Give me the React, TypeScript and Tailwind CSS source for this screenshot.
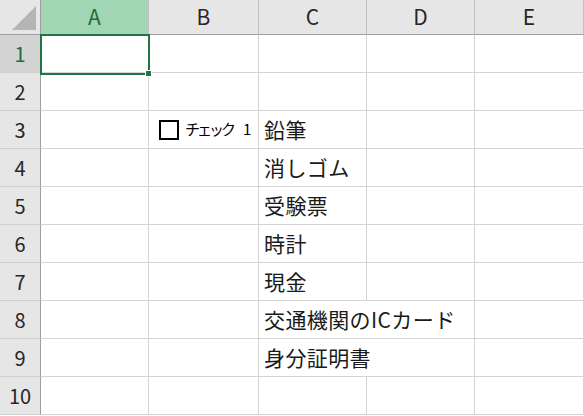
import { Fragment } from "react"

const COLUMNS = ["A", "B", "C", "D", "E"] as const
const ROWS = [1, 2, 3, 4, 5, 6, 7, 8, 9, 10] as const

// column C contents, keyed by row number
const ITEMS: Record<number, string> = {
  3: "鉛筆",
  4: "消しゴム",
  5: "受験票",
  6: "時計",
  7: "現金",
  8: "交通機関のICカード",
  9: "身分証明書",
}

const FONT = "font-['Noto_Sans_CJK_JP','Noto_Sans',sans-serif]"

function CornerCell() {
  return (
    <div className="flex items-end justify-end border-r border-b border-[#9e9e9e] bg-[#e6e6e6] pr-[4px] pb-[4px]">
      <svg width="24" height="24" viewBox="0 0 24 24">
        <polygon points="24,0 24,24 0,24" fill="#b5b5b5" />
      </svg>
    </div>
  )
}

function ColumnHeader({ label, active }: { label: string; active: boolean }) {
  return (
    <div
      className={`flex items-center justify-center border-r border-b border-r-[#c0c0c0] border-b-[#9e9e9e] text-[21px] ${
        active ? "bg-[#a0d6b4] text-[#1e6b3e]" : "bg-[#e6e6e6] text-[#262626]"
      }`}
    >
      {label}
    </div>
  )
}

function RowHeader({ n, active }: { n: number; active: boolean }) {
  return (
    <div
      className={`flex items-center justify-center border-r border-b border-r-[#9e9e9e] border-b-[#d0d0d0] text-[20px] ${
        active ? "bg-[#d3d3d3] text-[#1e6b3e]" : "bg-[#e6e6e6] text-[#262626]"
      }`}
    >
      {n}
    </div>
  )
}

function CheckBox() {
  return (
    <div className="flex h-full items-center pl-[10px]">
      <span className="block h-[20px] w-[20px] border-2 border-black bg-white" />
      <span className="ml-[6px] text-[15px] tracking-[-3px] text-black">チェック</span>
      <span className="ml-[10px] text-[15px] text-black">1</span>
    </div>
  )
}

function Cell({ row, col }: { row: number; col: string }) {
  const selected = row === 1 && col === "A"
  return (
    <div className="relative border-r border-b border-[#d4d4d4] bg-white">
      {col === "B" && row === 3 && <CheckBox />}
      {col === "C" && ITEMS[row] && (
        <div className="relative z-10 flex h-full w-max min-w-full items-center bg-white pr-[2px] pl-[5px] text-[21px] tracking-[0.4px] whitespace-nowrap text-[#1a1a1a]">
          {ITEMS[row]}
        </div>
      )}
      {selected && (
        <div className="absolute -top-px -left-px z-20 h-[41px] w-[110px] border-2 border-[#217346]">
          <div className="absolute -right-[4px] -bottom-[4px] h-[7px] w-[7px] border border-white bg-[#217346]" />
        </div>
      )}
    </div>
  )
}

export default function App() {
  return (
    <div className={`h-[416px] w-[584px] overflow-hidden bg-white ${FONT}`}>
      <div className="grid grid-cols-[41px_108px_110px_108px_108px_109px] grid-rows-[35px_repeat(10,38px)]">
        <CornerCell />
        {COLUMNS.map((c) => (
          <ColumnHeader key={c} label={c} active={c === "A"} />
        ))}
        {ROWS.map((r) => (
          <Fragment key={r}>
            <RowHeader n={r} active={r === 1} />
            {COLUMNS.map((c) => (
              <Cell key={c} row={r} col={c} />
            ))}
          </Fragment>
        ))}
      </div>
    </div>
  )
}
